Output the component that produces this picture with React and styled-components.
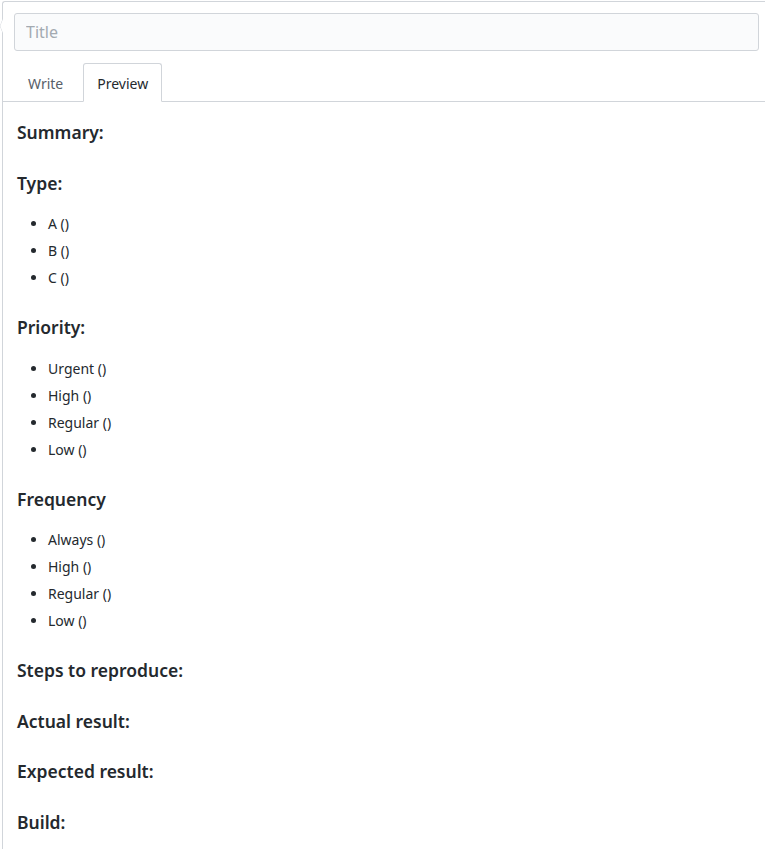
import React from "react";
import styled, { createGlobalStyle } from "styled-components";

const GlobalStyle = createGlobalStyle`
  html, body {
    margin: 0;
    padding: 0;
    background: #fff;
    overflow: hidden;
  }
  body {
    font-family: "Segoe UI", "Noto Sans", "Open Sans", "Liberation Sans", sans-serif;
    color: #24292e;
  }
`;

const Comment = styled.div`
  position: relative;
  margin: 1px 0 0 2px;
  border: 1px solid #d1d5da;
  border-right: none;
  border-bottom: none;
  border-top-left-radius: 3px;
  min-height: 860px;
  background: #fff;

  &::before,
  &::after {
    content: "";
    position: absolute;
    top: 16px;
    left: -8px;
    border: 8px solid transparent;
    border-right-color: #d1d5da;
    border-left-width: 0;
    transform: scaleX(0.4);
    transform-origin: right center;
  }
  &::after {
    left: -7px;
    top: 17px;
    border-width: 7px;
    border-left-width: 0;
    border-right-color: #fff;
  }
`;

const Header = styled.div`
  padding: 11px 6px 0 11px;
  border-bottom: 1px solid #d1d5da;
`;

const TitleInput = styled.input`
  display: block;
  box-sizing: border-box;
  width: 100%;
  height: 38px;
  padding: 0 11px;
  font-family: inherit;
  font-size: 16px;
  color: #24292e;
  background: #fafbfc;
  border: 1px solid #d1d5da;
  border-radius: 3px;
  outline: none;

  &::placeholder {
    color: #a3aab1;
  }
`;

const Tabs = styled.div`
  display: flex;
  gap: 6px;
  margin-top: 12px;
  margin-bottom: -1px;
`;

const Tab = styled.div`
  box-sizing: border-box;
  height: 39px;
  padding: 1px 13px 0;
  display: flex;
  align-items: center;
  font-size: 14px;
  color: ${(p) => (p.$active ? "#24292e" : "#586069")};
  background: ${(p) => (p.$active ? "#fff" : "transparent")};
  border: 1px solid ${(p) => (p.$active ? "#d1d5da" : "transparent")};
  border-bottom: 1px solid ${(p) => (p.$active ? "#fff" : "transparent")};
  border-radius: 3px 3px 0 0;
`;

const Body = styled.div`
  padding: 19px 14px 20px 14px;
`;

const Heading = styled.h3`
  margin: 28px 0 19px;
  font-size: 17.5px;
  line-height: 22.5px;
  font-weight: 600;
  color: #24292e;

  &:first-child {
    margin-top: 0;
  }
`;

const List = styled.ul`
  margin: 0;
  padding-left: 31px;
`;

const Item = styled.li`
  font-size: 14px;
  line-height: 21px;
  color: #24292e;

  & + & {
    margin-top: 6px;
  }
`;

const sections = [
  { title: "Summary:" },
  { title: "Type:", items: ["A ()", "B ()", "C ()"] },
  { title: "Priority:", items: ["Urgent ()", "High ()", "Regular ()", "Low ()"] },
  { title: "Frequency", items: ["Always ()", "High ()", "Regular ()", "Low ()"] },
  { title: "Steps to reproduce:" },
  { title: "Actual result:" },
  { title: "Expected result:" },
  { title: "Build:" },
];

export default function App() {
  return (
    <>
      <GlobalStyle />
      <Comment>
        <Header>
          <TitleInput placeholder="Title" />
          <Tabs>
            <Tab>Write</Tab>
            <Tab $active>Preview</Tab>
          </Tabs>
        </Header>
        <Body>
          {sections.map((s) => (
            <React.Fragment key={s.title}>
              <Heading>{s.title}</Heading>
              {s.items && (
                <List>
                  {s.items.map((it) => (
                    <Item key={it}>{it}</Item>
                  ))}
                </List>
              )}
            </React.Fragment>
          ))}
        </Body>
      </Comment>
    </>
  );
}
